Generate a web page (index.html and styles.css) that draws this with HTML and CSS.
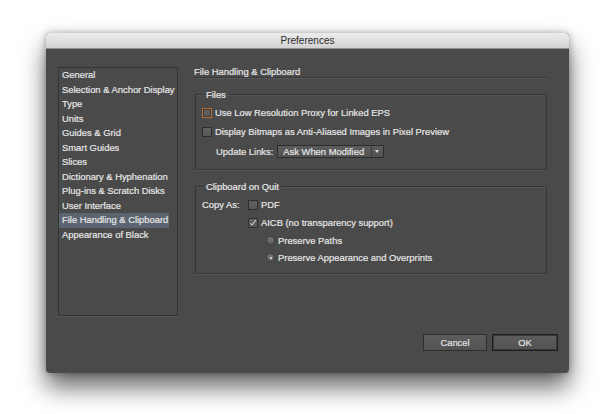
FILE: index.html
```html
<!DOCTYPE html>
<html>
<head>
<meta charset="utf-8">
<link rel="stylesheet" href="styles.css">
</head>
<body>
<div class="stage">
  <div class="window">
    <div class="titlebar">Preferences</div>
    <div class="content">
      <div class="main">
        <ul class="nav">
          <li>General</li>
          <li>Selection &amp; Anchor Display</li>
          <li>Type</li>
          <li>Units</li>
          <li>Guides &amp; Grid</li>
          <li>Smart Guides</li>
          <li>Slices</li>
          <li>Dictionary &amp; Hyphenation</li>
          <li>Plug-ins &amp; Scratch Disks</li>
          <li>User Interface</li>
          <li class="selected">File Handling &amp; Clipboard</li>
          <li>Appearance of Black</li>
        </ul>
        <div class="panel">
          <div class="panel-title">File Handling &amp; Clipboard</div>
          <fieldset class="group files">
            <legend>Files</legend>
            <div class="row"><span class="check focus"></span><span>Use Low Resolution Proxy for Linked EPS</span></div>
            <div class="row"><span class="check"></span><span>Display Bitmaps as Anti-Aliased Images in Pixel Preview</span></div>
            <div class="row update"><span class="label">Update Links:</span>
              <span class="select"><span class="select-text">Ask When Modified</span><span class="select-arrow"></span></span>
            </div>
          </fieldset>
          <fieldset class="group clip">
            <legend>Clipboard on Quit</legend>
            <div class="row"><span class="copy-label">Copy As:</span><span class="check"></span><span>PDF</span></div>
            <div class="row indent1"><span class="check checked"><svg viewBox="0 0 10 10" width="10" height="10"><path d="M2 5.2 L4 7.6 L8.6 1.2" fill="none" stroke="#e8e8e8" stroke-width="1.2"/></svg></span><span>AICB (no transparency support)</span></div>
            <div class="row indent2"><span class="radio"></span><span>Preserve Paths</span></div>
            <div class="row indent2"><span class="radio on"></span><span>Preserve Appearance and Overprints</span></div>
          </fieldset>
        </div>
      </div>
      <div class="footer">
        <button class="btn cancel">Cancel</button>
        <button class="btn ok">OK</button>
      </div>
    </div>
  </div>
</div>
</body>
</html>
```

FILE: styles.css
```css
html, body {
  margin: 0;
  padding: 0;
  background: #ffffff;
}

body {
  width: 600px;
  height: 414px;
  overflow: hidden;
  font-family: "Liberation Sans", Arial, sans-serif;
  font-size: 9.4px;
  color: #e6e6e6;
  -webkit-text-stroke: 0.2px #e6e6e6;
}

.stage {
  padding: 33px 0 0 46px;
}

.window {
  width: 523px;
  height: 340px;
  border-radius: 4px;
  background: #4a4a4a;
  box-shadow: 0 14px 24px rgba(0, 0, 0, 0.6), 0 0 7px rgba(0, 0, 0, 0.3);
  display: flex;
  flex-direction: column;
  overflow: hidden;
}

.titlebar {
  height: 16px;
  line-height: 16px;
  flex: none;
  text-align: center;
  font-size: 10px;
  color: #2c2c2c;
  -webkit-text-stroke: 0;
  background: linear-gradient(#ececec, #d2d2d2);
  border-bottom: 1px solid #8f8f8f;
  box-sizing: border-box;
}

.content {
  flex: 1;
  display: flex;
  flex-direction: column;
  padding: 18px 11px 22px 12px;
  box-sizing: border-box;
}

.main {
  display: flex;
  gap: 15px;
  align-items: flex-start;
}

.nav {
  list-style: none;
  margin: 0;
  padding: 0 8px 0 0;
  width: 120px;
  height: 249px;
  box-sizing: border-box;
  border: 1px solid #333333;
  box-shadow: 0 1px 0 #575757;
  background: #4a4a4a;
}

.nav li {
  height: 14.5px;
  line-height: 14.5px;
  padding-left: 3px;
  white-space: nowrap;
}

.nav li.selected {
  background: #5d6471;
}

.panel {
  width: 354px;
}

.panel-title {
  height: 10px;
  line-height: 10px;
  border-bottom: 1px solid #383838;
  box-shadow: 0 1px 0 #585858;
  padding-left: 1px;
}

.group {
  margin: 11px 0 0 2px;
  width: 352px;
  box-sizing: border-box;
  border: 1px solid #363636;
  box-shadow: inset 0 1px 0 #555555, 0 1px 0 #555555;
  padding: 3px 6px 7px 6px;
}

.group legend {
  padding: 0 2px;
  margin-left: 2px;
  line-height: 11px;
}

.row {
  display: flex;
  align-items: center;
  height: 19px;
  white-space: nowrap;
}

.check {
  width: 10px;
  height: 10px;
  box-sizing: border-box;
  border: 1px solid #2e2e2e;
  background: linear-gradient(#626262, #575757);
  margin-right: 3px;
  flex: none;
  display: flex;
  align-items: center;
  justify-content: center;
}

.check.focus {
  border-color: #b8702e;
  box-shadow: inset 0 0 0 1px #3a3a3a;
}

.check svg {
  display: block;
}

.update {
  height: 21px;
  padding-left: 14px;
}

.update .label {
  margin-right: 4px;
}

.select {
  display: flex;
  align-items: center;
  width: 107px;
  height: 13px;
  box-sizing: border-box;
  border: 1px solid #2d2d2d;
  background: linear-gradient(#5c5c5c, #535353);
}

.select-text {
  flex: 1;
  padding-left: 5px;
}

.select-arrow {
  width: 11px;
  height: 100%;
  border-left: 1px solid #3a3a3a;
  position: relative;
}

.select-arrow::after {
  content: "";
  position: absolute;
  left: 3px;
  top: 4px;
  border-left: 2.5px solid transparent;
  border-right: 2.5px solid transparent;
  border-top: 3px solid #dcdcdc;
}

.clip {
  margin-top: 11px;
  padding: 4px 6px 6px 6px;
}

.clip .row {
  height: 17.7px;
}

.copy-label {
  width: 46px;
  flex: none;
}

.indent1 {
  padding-left: 46px;
}

.indent2 {
  padding-left: 64px;
}

.radio {
  display: block;
  width: 9px;
  height: 9px;
  box-sizing: border-box;
  border-radius: 50%;
  border: 1px solid #3c3c3c;
  background: linear-gradient(#747474, #626262);
  margin-right: 3px;
  flex: none;
  position: relative;
}

.radio.on::after {
  content: "";
  position: absolute;
  left: 2.5px;
  top: 2.5px;
  width: 2px;
  height: 2px;
  border-radius: 50%;
  background: #f0f0f0;
}

.footer {
  margin-top: auto;
  display: flex;
  justify-content: flex-end;
  gap: 5px;
}

.btn {
  font-family: "Liberation Sans", Arial, sans-serif;
  font-size: 9.4px;
  color: #e0e0e0;
  -webkit-text-stroke: 0.2px #e0e0e0;
  height: 17px;
  padding: 0;
  box-sizing: border-box;
  border: 1px solid #2e2e2e;
  background: linear-gradient(#5d5d5d, #525252);
}

.cancel {
  width: 64px;
}

.ok {
  width: 66px;
  border-color: #1e1e1e;
  box-shadow: inset 0 0 0 1px #3a3a3a;
}
```
